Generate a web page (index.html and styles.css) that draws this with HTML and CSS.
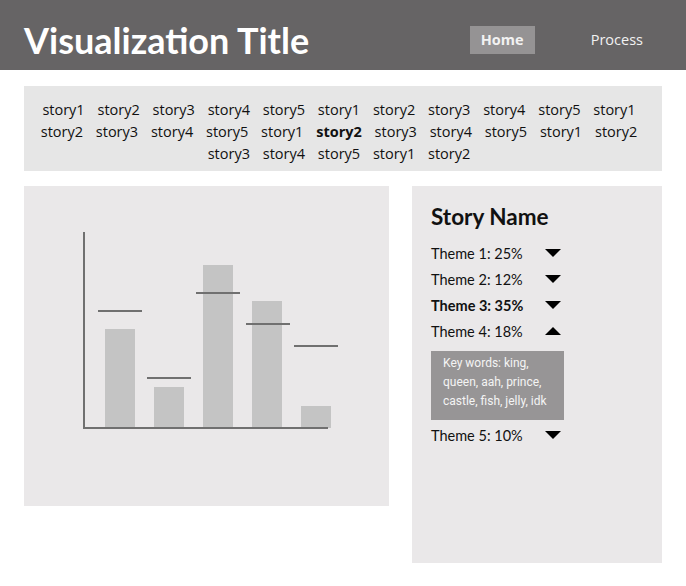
FILE: index.html
```html
<!DOCTYPE html>
<html>
<head>
<meta charset="utf-8">
<link rel="stylesheet" href="styles.css">
</head>
<body>
<header class="topbar">
  <h1 class="title">Visualization Title</h1>
  <nav class="nav">
    <a class="nav-item active">Home</a>
    <a class="nav-item">Process</a>
  </nav>
</header>
<main class="main">
  <section class="stories">
    <span>story1</span><span>story2</span><span>story3</span><span>story4</span><span>story5</span><span>story1</span><span>story2</span><span>story3</span><span>story4</span><span>story5</span><span>story1</span>
    <span>story2</span><span>story3</span><span>story4</span><span>story5</span><span>story1</span><span class="bold">story2</span><span>story3</span><span>story4</span><span>story5</span><span>story1</span><span>story2</span>
    <span>story3</span><span>story4</span><span>story5</span><span>story1</span><span>story2</span>
  </section>
  <div class="content">
    <section class="chart-panel">
      <svg class="chart" width="365" height="320" viewBox="0 0 365 320">
        <g fill="#c4c4c4">
          <rect x="81" y="143" width="30" height="99"/>
          <rect x="130" y="201" width="30" height="41"/>
          <rect x="179" y="79" width="30" height="163"/>
          <rect x="228" y="115" width="30" height="127"/>
          <rect x="277" y="220" width="30" height="22"/>
        </g>
        <g stroke="#707070" stroke-width="2" fill="none">
          <line x1="60" y1="46" x2="60" y2="243"/>
          <line x1="59" y1="242" x2="304" y2="242"/>
          <line x1="74" y1="125" x2="118" y2="125"/>
          <line x1="123" y1="192" x2="167" y2="192"/>
          <line x1="172" y1="107" x2="216" y2="107"/>
          <line x1="222" y1="138" x2="266" y2="138"/>
          <line x1="270" y1="160" x2="314" y2="160"/>
        </g>
      </svg>
    </section>
    <aside class="story-panel">
      <h2 class="story-name">Story Name</h2>
      <ul class="themes">
        <li class="theme"><span class="theme-label">Theme 1: 25%</span><span class="tri down"></span></li>
        <li class="theme"><span class="theme-label">Theme 2: 12%</span><span class="tri down"></span></li>
        <li class="theme"><span class="theme-label bold">Theme 3: 35%</span><span class="tri down"></span></li>
        <li class="theme"><span class="theme-label">Theme 4: 18%</span><span class="tri up"></span></li>
        <li class="keywords">Key words: king, queen, aah, prince, castle, fish, jelly, idk</li>
        <li class="theme"><span class="theme-label">Theme 5: 10%</span><span class="tri down"></span></li>
      </ul>
    </aside>
  </div>
</main>
</body>
</html>
```
FILE: styles.css
```css
* { box-sizing: border-box; }
body {
  margin: 0;
  background: #ffffff;
  font-family: "Lato", "Open Sans", sans-serif;
  color: #111;
}
.topbar {
  height: 70px;
  background: #666465;
  display: flex;
  align-items: center;
  justify-content: space-between;
  padding: 10px 43px 0 24px;
}
.title {
  margin: 0;
  font-size: 36px;
  font-weight: 700;
  color: #ffffff;
  letter-spacing: 0;
}
.nav {
  display: flex;
  align-items: center;
  gap: 56px;
}
.nav-item {
  color: #f2f2f2;
  font-family: "Open Sans", sans-serif;
  font-size: 14.5px;
  line-height: 28px;
}
.nav-item.active {
  background: #959394;
  font-weight: 700;
  width: 65px;
  text-align: center;
}
.main {
  padding: 16px 24px 0;
}
.stories {
  height: 85px;
  background: #e6e6e6;
  display: flex;
  flex-wrap: wrap;
  justify-content: center;
  align-content: flex-start;
  column-gap: 12.8px;
  padding: 13px 20px 0 12px;
  font-family: "Open Sans", sans-serif;
  font-size: 14.5px;
  line-height: 22px;
  color: #111;
}
.bold { font-weight: 700; }
.content {
  display: flex;
  align-items: flex-start;
  gap: 23px;
  margin-top: 15px;
}
.chart-panel {
  width: 365px;
  height: 320px;
  background: #eae8e9;
}
.chart { display: block; }
.story-panel {
  width: 250px;
  height: 377px;
  background: #eae8e9;
  padding: 16px 19px;
}
.story-name {
  margin: 0 0 8px;
  font-size: 22.5px;
  font-weight: 700;
  line-height: 30px;
}
.themes {
  list-style: none;
  margin: 0;
  padding: 0;
}
.theme {
  display: flex;
  align-items: center;
  height: 26px;
  font-size: 14.5px;
}
.theme-label { width: 114px; }
.tri {
  width: 0;
  height: 0;
  border-left: 8px solid transparent;
  border-right: 8px solid transparent;
}
.tri.down { border-top: 8px solid #000; }
.tri.up { border-bottom: 8px solid #000; }
.keywords {
  width: 133px;
  height: 69px;
  margin: 7px 0 2px;
  background: #979596;
  color: #f4f4f4;
  font-family: "Roboto", sans-serif;
  font-size: 12px;
  line-height: 19px;
  padding: 3px 8px 0 12px;
}
```
